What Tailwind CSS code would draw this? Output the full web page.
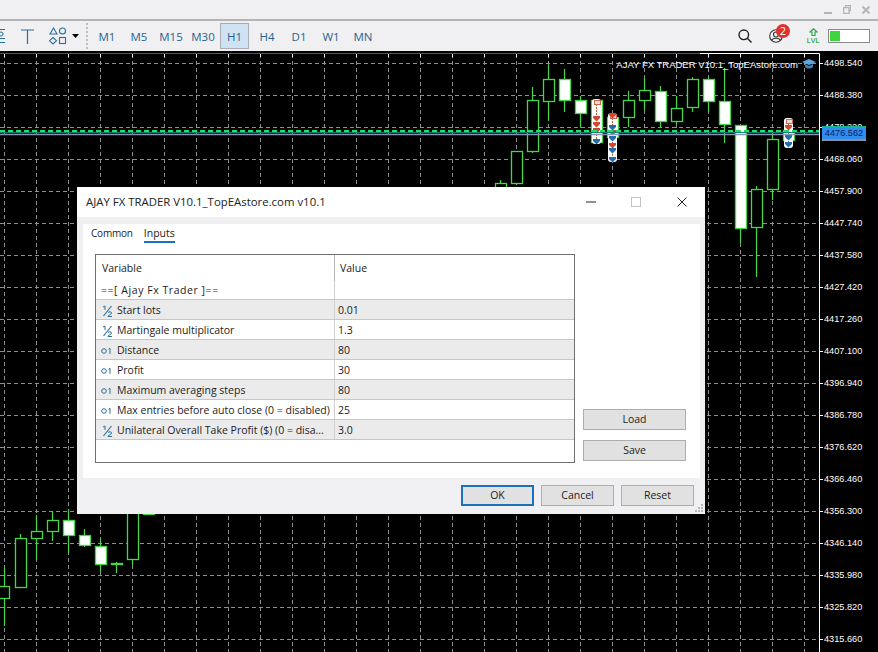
<!DOCTYPE html>
<html lang="en">
<head>
<meta charset="UTF-8">
<title>AJAY FX TRADER</title>
<script src="https://cdn.jsdelivr.net/npm/@tailwindcss/browser@4"></script>
</head>
<body class="w-[878px] h-[652px] overflow-hidden bg-black font-['Open_Sans','Liberation_Sans',sans-serif]">
<div class="relative w-[878px] h-[652px] flex flex-col">

  <!-- title bar -->
  <div class="h-[21px] shrink-0 bg-[#f0eff2] border-b-2 border-[#b4b4b4] flex justify-end items-center gap-[11px] pr-[8px]">
    <svg width="8" height="10" viewBox="0 0 8 10"><path d="M0 8h8" stroke="#b5b5b5" stroke-width="2"/></svg>
    <svg width="8" height="9" viewBox="0 0 8 9" fill="none" stroke="#b5b5b5" stroke-width="1.3"><path d="M2.5 2V.7h5v5H6"/><path d="M.7 2.7h5.3v5.6H.7z"/></svg>
    <svg width="8" height="8" viewBox="0 0 8 8"><path d="M.5.5l7 7M7.5.5l-7 7" stroke="#b5b5b5" stroke-width="2"/></svg>
  </div>

  <!-- toolbar -->
  <div class="h-[30px] shrink-0 bg-[#f0eff2] flex items-center text-[#27648f] text-[11.5px]">
    <svg class="shrink-0" width="5" height="18" viewBox="0 0 5 18" fill="none" stroke="#2b6f9e"><path d="M-2 2.5h7M-2 15.5h7M-2 11.5h7"/><circle cx="1" cy="7" r="2"/></svg>
    <svg class="ml-[16px] shrink-0" width="13" height="15" viewBox="0 0 13 15" fill="none" stroke="#2b6f9e" stroke-width="1.2"><path d="M0 1h13M6.5 1v14"/></svg>
    <svg class="ml-[15px] shrink-0" width="18" height="18" viewBox="0 0 18 18" fill="none" stroke="#2b6f9e" stroke-width="1.1"><path d="M4.5 1L8 7H1z"/><circle cx="13.5" cy="4" r="3"/><path d="M4 10.5l3.5 3.2L4 17 .5 13.7z"/><rect x="10.5" y="10.5" width="6" height="6"/></svg>
    <svg class="ml-[5px] shrink-0" width="7" height="4" viewBox="0 0 7 4"><path d="M0 0h7L3.500 4z" fill="#000"/></svg>
    <div class="ml-[7px] h-[26px] border-l-2 border-dotted border-[#bdbdbd]"></div>
    <div class="ml-[3px] flex">
      <div class="w-[32px] h-[26px] pt-px flex items-center justify-center">M1</div>
      <div class="w-[32px] h-[26px] pt-px flex items-center justify-center">M5</div>
      <div class="w-[32px] h-[26px] pt-px flex items-center justify-center">M15</div>
      <div class="w-[32px] h-[26px] pt-px flex items-center justify-center">M30</div>
      <div class="w-[29px] h-[26px] pt-px ml-px mr-[2px] flex items-center justify-center bg-[#cfe2f4] border border-[#a9adb3]">H1</div>
      <div class="w-[32px] h-[26px] pt-px flex items-center justify-center">H4</div>
      <div class="w-[32px] h-[26px] pt-px flex items-center justify-center">D1</div>
      <div class="w-[32px] h-[26px] pt-px flex items-center justify-center">W1</div>
      <div class="w-[32px] h-[26px] pt-px flex items-center justify-center">MN</div>
    </div>
    <div class="ml-auto flex items-center">
      <svg width="14" height="14" viewBox="0 0 14 14" fill="none" stroke="#222" stroke-width="1.4"><circle cx="5.800" cy="5.800" r="4.800"/><path d="M9.300 9.300L13.500 13.500"/></svg>
      <div class="relative ml-[17px] w-[14px] h-[14px]">
        <svg width="14" height="14" viewBox="0 0 14 14" fill="none" stroke="#333" stroke-width="1.1"><circle cx="7" cy="7" r="6.300"/><circle cx="7" cy="5.500" r="2.500"/><path d="M2.500 11.500c1-3 8-3 9 0"/></svg>
        <div class="absolute left-[7px] top-[-5px] w-[14px] h-[14px] rounded-full bg-[#e0322c] text-white text-[11px] leading-[14px] text-center">2</div>
      </div>
      <div class="ml-[22px] w-[16px] flex flex-col items-center">
        <svg width="9" height="8" viewBox="0 0 9 8" fill="none" stroke="#2fa84f" stroke-width="1.2"><path d="M4.500.8L1 4h2v3.500h3V4h2z"/></svg>
        <div class="text-[7.5px] leading-[9px] text-[#2fa84f] font-semibold">LVL</div>
      </div>
      <div class="ml-[7px] mr-[8px] w-[42px] h-[14px] border border-[#8a8a8a] bg-white p-px">
        <div class="w-[10px] h-full bg-[#3fd53f]"></div>
      </div>
    </div>
  </div>

  <!-- chart -->
  <div class="relative flex-1 bg-black">
    <svg id="chart" class="absolute left-0 top-0" width="878" height="601" viewBox="0 51 878 601"></svg>
    <div class="absolute right-[80px] top-[7px] text-[9.500px] leading-[13px] text-white font-['Liberation_Sans',sans-serif]">AJAY FX TRADER V10.1_TopEAstore.com</div>
    <svg class="absolute left-[802px] top-[7px]" width="14" height="12" viewBox="0 0 14 12"><path d="M0 4l7-3 7 3-7 3z" fill="#5fa8dc"/><path d="M3 6v3c2 2 6 2 8 0V6L7 8z" fill="#3b83bd"/></svg>

    <div id="axis" class="absolute left-[824px] top-0 text-[9.200px] text-white font-['Liberation_Sans',sans-serif]"></div>

    <div class="absolute left-[822px] top-[75px] w-[44px] h-[15px] bg-[#2f8cf0] border-t-2 border-[#17b58a] border-b-2 border-b-[#8a8fa0] text-[9.200px] leading-[11px] text-[#0b1f55] text-center font-['Liberation_Sans',sans-serif]">4476.562</div>
  </div>

  <!-- settings dialog -->
  <div class="absolute left-[77px] top-[187px] w-[628px] h-[327px] bg-[#f0eff2] flex flex-col text-[#1c1c1c] text-[10.500px]">
    <div class="h-[30px] shrink-0 bg-white flex items-center pl-[9px] text-[11.400px] text-[#222]">
      <div>AJAY FX TRADER V10.1_TopEAstore.com v10.1</div>
      <svg class="ml-auto mr-[35px]" width="10" height="2" viewBox="0 0 10 2"><path d="M0 1h10" stroke="#222"/></svg>
      <svg class="mr-[36px]" width="10" height="10" viewBox="0 0 10 10"><rect x=".5" y=".5" width="9" height="9" fill="none" stroke="#c4c4c4"/></svg>
      <svg class="mr-[18px]" width="10" height="10" viewBox="0 0 10 10"><path d="M.5.5l9 9M9.500.5l-9 9" stroke="#222"/></svg>
    </div>
    <div class="ml-[6px] mr-[5px] mt-[7px] h-[254px] bg-white shrink-0 flex flex-col">
      <div class="flex gap-[12px] pl-[8px] h-[30px] shrink-0">
        <div class="h-[19px] leading-[18px] text-[10px] tracking-[-.2px]">Common</div>
        <div class="h-[19px] leading-[18px] border-b-2 border-[#1a72b8] -ml-px">Inputs</div>
      </div>
      <div class="flex pl-[12px]">
        <div class="w-[480px] h-[209px] border border-[#6f6f6f] bg-white shrink-0 flex flex-col">
          <div class="flex h-[26px] items-center shrink-0">
            <div class="w-[239px] h-full pt-px flex items-center pl-[6px] border-r border-[#b5b5b5]">Variable</div>
            <div class="pl-[5px] pt-px">Value</div>
          </div>
          <div id="rows"></div>
        </div>
        <div class="ml-[8px] flex flex-col justify-end gap-[10px] pb-[2px]">
          <div class="w-[103px] h-[21px] pt-px bg-[#e1e1e1] border border-[#adadad] flex items-center justify-center">Load</div>
          <div class="w-[103px] h-[21px] pt-px bg-[#e1e1e1] border border-[#adadad] flex items-center justify-center">Save</div>
        </div>
      </div>
    </div>
    <div class="flex justify-end gap-[7px] pt-[7px] pr-[11px]">
      <div class="w-[73px] h-[21px] pt-px bg-[#e1e1e1] border-2 border-[#1a72b8] flex items-center justify-center">OK</div>
      <div class="w-[73px] h-[21px] pt-px bg-[#e1e1e1] border border-[#adadad] flex items-center justify-center">Cancel</div>
      <div class="w-[73px] h-[21px] pt-px bg-[#e1e1e1] border border-[#adadad] flex items-center justify-center">Reset</div>
    </div>
    <svg class="absolute right-[1px] bottom-[1px]" width="9" height="9" viewBox="0 0 9 9" fill="#b9b9b9"><path d="M6 0h2v2H6zM3 3h2v2H3zM6 3h2v2H6zM0 6h2v2H0zM3 6h2v2H3zM6 6h2v2H6z"/></svg>
  </div>
</div>

<script>
  // chart drawn from hand-read candles: [x, wickTop, wickBottom, bodyTop, bodyBottom, filled]
  const candles = [
    [4,568,626,586,598,0],[20,534,588,538,587,0],[36,515,560,531,538,0],[52,511,541,520,531,0],
    [68,509,553,520,535,1],[84,529,547,535,545,1],[100,539,572,546,564,1],[116,562,573,563,564,1],
    [132,505,565,505,559,0],[148,505,514,505,514,0],
    [500,180,200,183,200,0],[516,151,185,151,183,0],[532,87,153,100,151,0],[548,65,121,79,101,0],
    [564,69,112,79,100,1],[580,96,127,100,113,1],[596,100,142,100,142,1],[612,117,137,117,137,1],
    [628,91,127,100,117,0],[644,78,110,90,100,0],[660,86,127,91,121,1],[676,96,124,108,121,0],
    [692,77,112,79,107,0],[708,77,112,79,101,1],[724,68,143,101,124,1],[740,125,243,125,228,1],
    [756,186,277,189,227,0],[772,133,200,139,189,0],[788,130,140,130,140,1]
  ];
  const labels = ['4498.540','4488.380','4478.220','4468.060','4457.900','4447.740','4437.580','4427.420','4417.260','4407.100','4396.940','4386.780','4376.620','4366.460','4356.300','4346.140','4335.980','4325.820','4315.660'];
  let s = '';
  // grid
  for (let x = 4; x < 819; x += 32) s += `<path d="M${x}.5 54V652" stroke="#8f8f8f" stroke-dasharray="4 3"/><path d="M${x}.5 54v3" stroke="#fff"/>`;
  labels.forEach((l, i) => {
    const y = 63 + i * 32;
    s += `<path d="M0 ${y}.5H819" stroke="#8f8f8f" stroke-dasharray="4 3"/><path d="M819 ${y}.5h4" stroke="#fff"/>`;
  });
  s += '<path d="M0 53.5H700" stroke="#555"/><path d="M700 53.5H819.5V652" fill="none" stroke="#fff"/>';
  // candles
  candles.forEach(([x, t, b, bt, bb, f]) => {
    s += `<path d="M${x}.5 ${t}V${b}" stroke="#46d646" stroke-width="1.2"/>`;
    s += `<rect x="${x-5}.5" y="${bt}.5" width="11" height="${bb-bt}" fill="${f ? '#fff' : '#000'}" stroke="#46d646" stroke-width="1.300"/>`;
  });
  // trade arrows, stacked on a white capsule
  const arrow = (x, y, c) => `<path d="M${x-3} ${y-2}h7v2l-3.500 3.500L${x-3} ${y}z" fill="${c}"/>`;
  [
    [596, 99, 144, [118,124,130], [141]],
    [612, 113, 162, [115,132,145], [127,138,150,159]],
    [788, 118, 148, [127], [137,144]]
  ].forEach(([x, top, bot, reds, blues]) => {
    s += `<rect x="${x-4}" y="${top}" width="9" height="${bot-top}" rx="3" fill="#fff"/>`;
    s += `<path d="M${x}.5 ${top+2}V${bot-4}" stroke="#c0573f" stroke-dasharray="2 1"/>`;
    s += `<rect x="${x-2}.5" y="${top+1}.5" width="6" height="4" fill="#f3d9d0" stroke="#c9694f"/>`;
    reds.forEach(y => s += arrow(x, y, '#d2472f'));
    blues.forEach(y => s += arrow(x, y, '#1f6fae'));
  });
  // price lines
  s += '<path d="M0 134.500H819" stroke="#8a93b0" stroke-width="1.500"/><path d="M0 132.500H819" stroke="#15806a"/><path d="M0 131H819" stroke="#1fe06a" stroke-width="2" stroke-dasharray="5 3"/>';
  document.getElementById('chart').innerHTML = s;

  document.getElementById('axis').innerHTML = labels.map((l, i) =>
    `<div style="position:absolute;top:${6 + i * 32}px;line-height:12px">${l}</div>`).join('');

  const half = '<svg class="shrink-0" width="16" height="14" viewBox="0 0 16 14" fill="none" stroke="#2b6f9e"><path d="M2 3l2-1v4"/><path d="M10.500 2L2.500 12" stroke-width="1.200"/><path d="M7 8.500c1-1 3.500-1 3.500.5 0 1.500-3.500 2-3.500 3.500h4"/></svg>';
  const int = '<svg class="shrink-0" width="16" height="14" viewBox="0 0 16 14" fill="none" stroke="#2b6f9e"><circle cx="3" cy="7" r="2.300"/><path d="M7.500 5.300l1.500-1v5.500"/></svg>';
  const rows = [
    [half,'Start lots','0.01'],[half,'Martingale multiplicator','1.3'],[int,'Distance','80'],[int,'Profit','30'],
    [int,'Maximum averaging steps','80'],[int,'Max entries before auto close (0 = disabled)','25'],
    [half,'Unilateral Overall Take Profit ($) (0 = disa...','3.0']
  ];
  let h = `<div class="flex h-[18px]"><div class="w-[239px] pl-[5px] border-r border-[#d0d0d0] leading-[19px] tracking-[.550px]">==[ Ajay Fx Trader ]==</div></div>`;
  rows.forEach((r, i) => {
    h += `<div class="flex h-[20px] items-center border-t border-[#c6c6c6] ${i % 2 ? 'bg-white' : 'bg-[#ebebeb]'}">
      <div class="w-[239px] h-full pt-[2px] flex items-center pl-[5px] border-r border-[#d0d0d0] whitespace-nowrap">${r[0]}<span>${r[1]}</span></div>
      <div class="pl-[3px] pt-[2px]">${r[2]}</div></div>`;
  });
  h += '<div class="border-t border-[#c6c6c6]"></div>';
  document.getElementById('rows').innerHTML = h;
</script>
</body>
</html>
